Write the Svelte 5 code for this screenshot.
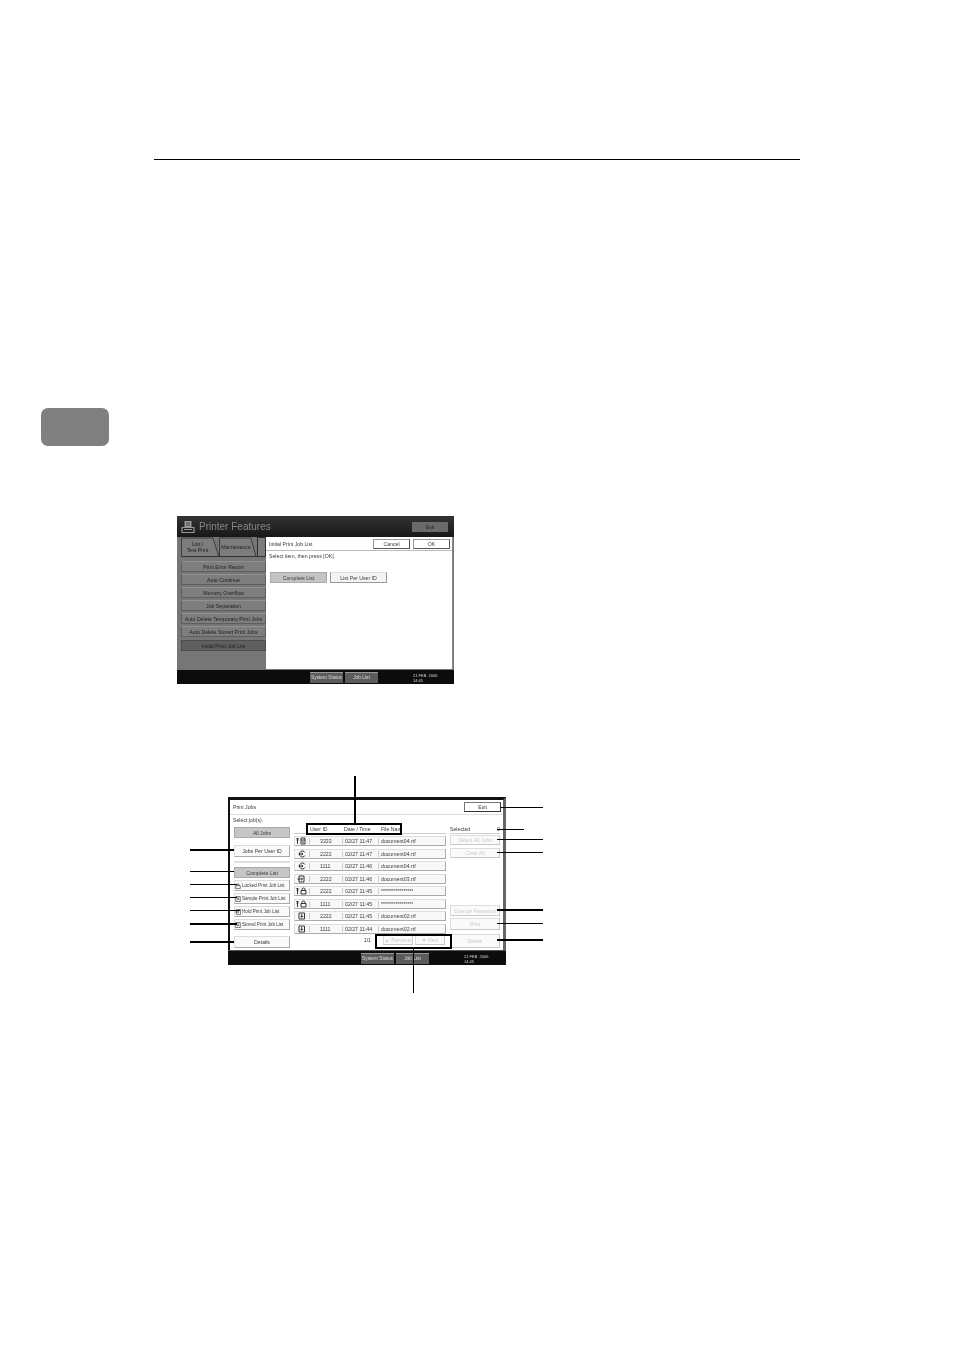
<script>
    const menu = [
        'Print Error Report',
        'Auto Continue',
        'Memory Overflow',
        'Job Separation',
        'Auto Delete Temporary Print Jobs',
        'Auto Delete Stored Print Jobs',
        'Initial Print Job List'
    ];
    const jobs = [
        {id:'3333', time:'02/27 11:47', file:'document04.rtf', icon:'keydoc'},
        {id:'2222', time:'02/27 11:47', file:'document04.rtf', icon:'circle'},
        {id:'1111', time:'02/27 11:46', file:'document04.rtf', icon:'circle'},
        {id:'2222', time:'02/27 11:46', file:'document03.rtf', icon:'hold'},
        {id:'2222', time:'02/27 11:45', file:'****************', icon:'keylock'},
        {id:'1111', time:'02/27 11:45', file:'****************', icon:'keylock'},
        {id:'2222', time:'02/27 11:45', file:'document02.rtf', icon:'stored'},
        {id:'1111', time:'02/27 11:44', file:'document02.rtf', icon:'stored'}
    ];
    // coordinates of the leader lines, relative to the diagram
    const leaders = [
        {x:164, y:0, w:2, h:48},
        {x:223, y:173, w:1, h:44},
        {x:0, y:73, w:44, h:2},
        {x:0, y:95, w:44, h:1},
        {x:0, y:108, w:47, h:1},
        {x:0, y:121, w:47, h:1},
        {x:0, y:134, w:50, h:1},
        {x:0, y:147, w:47, h:2},
        {x:0, y:165, w:44, h:2},
        {x:311, y:31, w:42, h:1},
        {x:307, y:53, w:27, h:1},
        {x:307, y:63, w:46, h:1},
        {x:307, y:76, w:46, h:1},
        {x:307, y:133, w:46, h:2},
        {x:307, y:147, w:46, h:1},
        {x:307, y:163, w:46, h:2}
    ];
</script>

{#snippet statusBar()}
    <div class='status'>
        <div class='statusBtn'>System Status</div>
        <div class='statusBtn'>Job List</div>
        <div class='clock'>21 FEB &nbsp;2006<br>14:45</div>
    </div>
{/snippet}

{#snippet jobIcon(kind)}
    <svg class='jobIcon' viewBox='0 0 12 8' width='12' height='8' fill='none' stroke='#222' stroke-width='.9'>
        {#if kind == 'keydoc' || kind == 'keylock'}
            <path d='M1.5 1V7M.5 1.5H2.5M.5 3H2.5' />
        {/if}
        {#if kind == 'keydoc'}
            <path d='M5 1H9V7H5ZM5 3H9M6 5H8' />
        {:else if kind == 'keylock'}
            <path d='M6 3.5V2.5A1.5 1.5 0 0 1 9 2.5V3.5M5 3.5H10V7H5Z' />
        {:else if kind == 'circle'}
            <path d='M9 2.5A3 3 0 1 0 9 5.5M2.5 4H7M5.5 2.8 7 4 5.5 5.2' />
        {:else if kind == 'hold'}
            <path d='M3 1H8V7H3ZM1.5 4H6.5M5.3 2.8 6.5 4 5.3 5.2' />
        {:else if kind == 'stored'}
            <path d='M3 1H8.5V7H3ZM5.7 2V5M4.5 4 5.7 5.3 7 4' />
        {/if}
    </svg>
{/snippet}

<div class='page'>
    <div class='rule'></div>
    <div class='chapterTab'></div>

    <div class='screen one'>
        <div class='titleBar'>
            <svg class='printer' viewBox='0 0 14 14' width='14' height='14'>
                <path d='M3.5 1H10.5V7H3.5Z' fill='#999' />
                <path d='M5 3H9M5 5H9' stroke='#333' stroke-width='.8' />
                <path d='M1 7.5H13V12.5H1Z' fill='none' stroke='#999' stroke-width='1.2' />
                <path d='M3 9.5H11' stroke='#999' stroke-width='1' />
            </svg>
            <span class='title'>Printer Features</span>
            <div class='exitDark'>Exit</div>
        </div>
        <div class='oneBody'>
            <div class='side'>
                <div class='tabs'>
                    <div class='tab first'>
                        <svg viewBox='0 0 39 20' width='39' height='20' fill='#7c7c7c' stroke='#2c2c2c' stroke-width='.8'><path d='M.5 20V1H32L38 20' /></svg>
                        <span>List /<br>Test Print</span>
                    </div>
                    <div class='tab second'>
                        <svg viewBox='0 0 38 20' width='38' height='20' fill='#7c7c7c' stroke='#2c2c2c' stroke-width='.8'><path d='M.5 20V1H32L37 20' /></svg>
                        <span>Maintenance</span>
                    </div>
                    <div class='tab third'></div>
                </div>
                <div class='menu'>
                    {#each menu as item, i}
                        <div class='menuBtn' class:on={i == menu.length - 1}>{item}</div>
                    {/each}
                </div>
            </div>
            <div class='panel'>
                <div class='panelHead'>
                    <span>Initial Print Job List</span>
                    <div class='headBtns'>
                        <div class='headBtn'>Cancel</div>
                        <div class='headBtn'>OK</div>
                    </div>
                </div>
                <div class='hint'>Select item, then press [OK].</div>
                <div class='choices'>
                    <div class='choice on'>Complete List</div>
                    <div class='choice'>List Per User ID</div>
                </div>
            </div>
        </div>
        {@render statusBar()}
    </div>

    <div class='diagram'>
        <div class='screen two'>
            <div class='twoHead'>
                <span>Print Jobs</span>
                <div class='exitLight'>Exit</div>
            </div>
            <div class='twoBody'>
                <div class='left'>
                    <div class='selectText'>Select job(s).</div>
                    <div class='btn grey allJobs'>All Jobs</div>
                    <div class='btn perUser'>Jobs Per User ID</div>
                    <div class='sep'></div>
                    <div class='btn grey tight'>Complete List</div>
                    <div class='btn tight small'>
                        <svg viewBox='0 0 8 8' width='6' height='6' fill='none' stroke='#222' stroke-width='.8'><path d='M2.5 3.5V2.5A1.5 1.5 0 0 1 5.5 2.5V3.5M1 3.5H7V7.5H1Z' /></svg>
                        Locked Print Job List
                    </div>
                    <div class='btn tight small'>
                        <svg viewBox='0 0 8 8' width='6' height='6' fill='none' stroke='#222' stroke-width='.8'><path d='M1 .5H7V7.5H1ZM2.5 5.5 4 2 5.5 5.5' /></svg>
                        Sample Print Job List
                    </div>
                    <div class='btn tight small'>
                        <svg viewBox='0 0 8 8' width='6' height='6' fill='none' stroke='#222' stroke-width='.8'><path d='M2 .5H7.5V7.5H2ZM0 4H5M3.7 2.8 5 4 3.7 5.2' /></svg>
                        Hold Print Job List
                    </div>
                    <div class='btn tight small'>
                        <svg viewBox='0 0 8 8' width='6' height='6' fill='none' stroke='#222' stroke-width='.8'><path d='M1 .5H7V7.5H1ZM4 1.5V5M2.7 3.8 4 5.2 5.3 3.8' /></svg>
                        Stored Print Job List
                    </div>
                    <div class='btn details'>Details</div>
                </div>
                <div class='middle'>
                    <div class='columns'>
                        <span class='colUser'>User ID</span>
                        <span class='colDate'>Date / Time</span>
                        <span class='colFile'>File Nam</span>
                    </div>
                    <div class='rows'>
                        {#each jobs as job}
                            <div class='row'>
                                <div class='cellIcon'>{@render jobIcon(job.icon)}</div>
                                <div class='cellId'>{job.id}</div>
                                <div class='cellTime'>{job.time}</div>
                                <div class='cellFile'>{job.file}</div>
                            </div>
                        {/each}
                    </div>
                    <div class='pager'>
                        <span class='pageNo'>1/1</span>
                        <div class='btn off pageBtn'>▲ Previous</div>
                        <div class='btn off pageBtn'>▼ Next</div>
                    </div>
                </div>
                <div class='right'>
                    <div class='selected'><span>Selected</span><span>0</span></div>
                    <div class='btn off selectAll'>Select All Jobs</div>
                    <div class='btn off clearAll'>Clear All</div>
                    <div class='btn off change'>Change Password</div>
                    <div class='btn off printBtn'>Print</div>
                    <div class='btn off deleteBtn'>Delete</div>
                </div>
            </div>
            {@render statusBar()}
        </div>
        {#each leaders as l}
            <div class='leader' style='left:{l.x}px;top:{l.y}px;width:{l.w}px;height:{l.h}px'></div>
        {/each}
        <div class='mark headMark'></div>
        <div class='mark pagerMark'></div>
    </div>
</div>

<style>
    :global(body){
        background:#fff;
    }
    .page{
        width:954px;
        height:1350px;
        padding-top:159px;
        box-sizing:border-box;
        overflow:hidden;
        font-family:"Liberation Sans",Arial,sans-serif;
        font-size:5.2px;
        color:#3a3a3a;
    }
    .rule{
        width:646px;
        height:1px;
        margin-left:154px;
        background:#000;
    }
    .chapterTab{
        width:68px;
        height:38px;
        margin:248px 0 0 41px;
        background:#808080;
        border-radius:7px;
    }

    .screen{
        width:277px;
        height:168px;
        box-sizing:border-box;
        display:flex;
        flex-direction:column;
        filter:blur(.3px);
    }
    .status{
        height:14px;
        flex-shrink:0;
        background:#0c0c0c;
        display:flex;
        align-items:center;
        padding-left:133px;
        padding-top:1px;
        box-sizing:border-box;
        gap:2px;
        color:#ddd;
    }
    .statusBtn{
        width:33px;
        height:11px;
        line-height:10px;
        box-sizing:border-box;
        background:#5c5c5c;
        border-top:1px solid #999;
        color:#ddd;
        font-size:4.8px;
        text-align:center;
        white-space:nowrap;
    }
    .clock{
        margin-left:33px;
        font-size:4px;
        line-height:5px;
        white-space:nowrap;
    }

    /* first screen: dimmed menu behind a white panel */
    .one{
        margin:70px 0 0 177px;
        background:#0c0c0c;
    }
    .titleBar{
        height:21px;
        display:flex;
        align-items:center;
        padding:0 6px 0 4px;
        background:linear-gradient(#333,#181818);
    }
    .title{
        margin-left:4px;
        font-size:10px;
        color:#888;
    }
    .exitDark{
        width:36px;
        height:10px;
        margin-left:auto;
        line-height:10px;
        text-align:center;
        background:#6a6a6a;
        color:#222;
    }
    .oneBody{
        flex:1;
        display:flex;
        min-height:0;
        background:#767676;
    }
    .side{
        width:89px;
        padding-left:4px;
        box-sizing:border-box;
        flex-shrink:0;
    }
    .tabs{
        height:19px;
        display:flex;
        border-bottom:1px solid #333;
        overflow:hidden;
    }
    .tab{
        height:20px;
        position:relative;
        display:flex;
        align-items:center;
        justify-content:center;
        text-align:center;
        line-height:6px;
        color:#222;
    }
    .tab svg{
        position:absolute;
        left:0;
        top:0;
    }
    .tab span{
        position:relative;
    }
    .first{
        width:38px;
        padding-right:5px;
        box-sizing:border-box;
    }
    .second{
        width:38px;
        padding-right:4px;
        box-sizing:border-box;
    }
    .third{
        width:9px;
        background:#7c7c7c;
        border:1px solid #2c2c2c;
        box-sizing:border-box;
    }
    .menu{
        margin-top:4px;
        display:flex;
        flex-direction:column;
        gap:2.1px;
    }
    .menuBtn{
        height:11px;
        line-height:10px;
        box-sizing:border-box;
        background:#7e7e7e;
        border:1px solid #5e5e5e;
        border-top-color:#929292;
        text-align:center;
        white-space:nowrap;
        color:#222;
    }
    .menuBtn.on{
        background:#5f5f5f;
        border-color:#4c4c4c;
    }
    .panel{
        width:187px;
        background:#fff;
        border-right:1px solid #888;
        box-sizing:border-box;
        margin-bottom:1px;
    }
    .panelHead{
        height:14px;
        box-sizing:border-box;
        border-bottom:1px solid #bbb;
        display:flex;
        align-items:center;
        padding:0 2px 0 3px;
    }
    .headBtns{
        margin-left:auto;
        display:flex;
        gap:3px;
    }
    .headBtn{
        width:37px;
        height:10px;
        line-height:9px;
        box-sizing:border-box;
        border:1px solid #555;
        border-top-color:#999;
        border-left-color:#999;
        text-align:center;
    }
    .hint{
        padding:2px 3px 0;
        line-height:7px;
    }
    .choices{
        margin:12px 0 0 4px;
        display:flex;
        gap:3px;
    }
    .choice{
        width:57px;
        height:11px;
        line-height:10px;
        box-sizing:border-box;
        text-align:center;
        border:1px solid #999;
        border-top-color:#ddd;
        background:#f4f4f4;
    }
    .choice.on{
        background:#c4c4c4;
        border-color:#aaa;
    }

    /* second screen with its numbered leader lines */
    .diagram{
        position:relative;
        display:flow-root;
        width:353px;
        height:216px;
        margin:92px 0 0 190px;
    }
    .two{
        width:278px;
        margin:21px 0 0 38px;
        background:#fff;
        border-top:3px solid #111;
        border-left:2px solid #111;
        border-right:3px solid #666;
    }
    .two .status{
        padding-left:133px;
        margin:0 -3px 0 -2px;
        border-top:1px solid #555;
        height:15px;
    }
    .twoHead{
        height:15px;
        flex-shrink:0;
        box-sizing:border-box;
        border-bottom:1px solid #ddd;
        display:flex;
        align-items:center;
        padding:0 2px 1px 3px;
    }
    .exitLight{
        width:37px;
        height:10px;
        margin-left:auto;
        line-height:8px;
        text-align:center;
        box-sizing:border-box;
        border:1px solid #333;
        border-top-color:#777;
        border-left-color:#777;
    }
    .twoBody{
        flex:1;
        min-height:0;
        display:flex;
        padding-left:4px;
        gap:4px;
    }
    .btn{
        height:11px;
        line-height:10px;
        box-sizing:border-box;
        border:1px solid #aaa;
        border-top-color:#ddd;
        border-left-color:#ddd;
        background:#fafafa;
        text-align:center;
        white-space:nowrap;
        display:flex;
        align-items:center;
        justify-content:center;
        gap:1px;
    }
    .btn.grey{
        background:#c6c6c6;
        border-color:#aaa;
    }
    .btn.off{
        color:#ccc;
        border-color:#ddd;
        border-right-color:#c8c8c8;
        border-bottom-color:#c8c8c8;
    }
    .left{
        width:56px;
        flex-shrink:0;
        display:flex;
        flex-direction:column;
    }
    .selectText{
        height:8px;
        line-height:8px;
        margin:1px 0 3px -1px;
    }
    .perUser{
        height:12px;
        margin-top:7px;
    }
    .sep{
        height:2px;
        margin:4px 0 4px;
        background:#e0e0e0;
    }
    .tight{
        margin-bottom:2px;
    }
    .small{
        justify-content:flex-start;
        padding-left:0;
        font-size:4.6px;
    }
    .details{
        height:12px;
        margin-top:4px;
    }
    .middle{
        width:152px;
        flex-shrink:0;
    }
    .columns{
        height:9px;
        margin-top:10px;
        line-height:8px;
        box-sizing:border-box;
        border-bottom:1px solid #ccc;
        display:flex;
    }
    .colUser{
        margin-left:16px;
        width:34px;
    }
    .colDate{
        width:37px;
    }
    .rows{
        margin-top:2px;
        display:flex;
        flex-direction:column;
        gap:2.55px;
    }
    .row{
        height:10px;
        box-sizing:border-box;
        border:1px solid #aaa;
        border-top-color:#ddd;
        border-left-color:#ddd;
        background:#f8f8f8;
        display:flex;
        align-items:center;
        white-space:nowrap;
        line-height:8px;
    }
    .cellIcon{
        width:14px;
        flex-shrink:0;
        border-right:1px solid #ccc;
        height:6px;
        display:flex;
        align-items:center;
    }
    .jobIcon{
        margin-left:1px;
    }
    .cellId{
        width:33px;
        padding-left:10px;
        box-sizing:border-box;
        flex-shrink:0;
        border-right:1px solid #ccc;
        line-height:6px;
    }
    .cellTime{
        width:36px;
        padding-left:2px;
        box-sizing:border-box;
        flex-shrink:0;
        border-right:1px solid #ccc;
        line-height:6px;
    }
    .cellFile{
        padding-left:2px;
        overflow:hidden;
    }
    .pager{
        margin-top:1px;
        height:10px;
        display:flex;
        align-items:center;
        justify-content:flex-end;
        gap:2px;
        padding-right:1px;
    }
    .pageNo{
        margin-right:10px;
    }
    .pageBtn{
        width:30px;
        height:10px;
    }
    .right{
        width:50px;
        flex-shrink:0;
        display:flex;
        flex-direction:column;
    }
    .selected{
        height:9px;
        margin-top:10px;
        line-height:8px;
        box-sizing:border-box;
        border-bottom:1px solid #ccc;
        display:flex;
        justify-content:space-between;
    }
    .selectAll{
        height:10px;
        margin-top:1px;
    }
    .clearAll{
        height:10px;
        margin-top:3px;
    }
    .change{
        margin-top:47px;
    }
    .printBtn{
        height:12px;
        margin-top:2px;
    }
    .deleteBtn{
        height:14px;
        margin-top:4px;
    }
    .leader{
        position:absolute;
        background:#000;
    }
    .mark{
        position:absolute;
        box-sizing:border-box;
        border:2px solid #000;
    }
    .headMark{
        left:116px;
        top:47px;
        width:96px;
        height:12px;
    }
    .pagerMark{
        left:185px;
        top:158px;
        width:77px;
        height:15px;
    }
</style>
